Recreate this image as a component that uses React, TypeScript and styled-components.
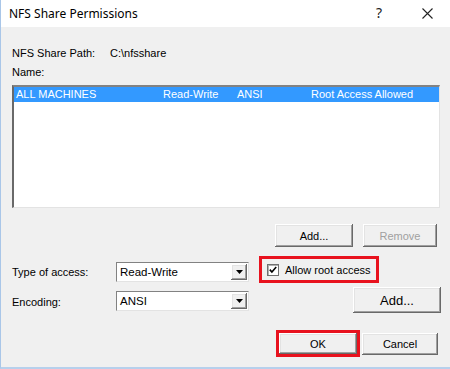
import React from 'react';
import styled, { createGlobalStyle } from 'styled-components';

const GlobalStyle = createGlobalStyle`
  html, body {
    margin: 0;
    padding: 0;
    background: #ffffff;
  }
  * {
    box-sizing: border-box;
  }
`;

const bevel = `
  box-shadow:
    inset -1px -1px #696969,
    inset 1px 1px #ffffff,
    inset -2px -2px #a0a0a0,
    inset 2px 2px #e3e3e3;
`;

const columns = [
  { key: 'name', width: 147, text: 'ALL MACHINES' },
  { key: 'access', width: 74, text: 'Read-Write' },
  { key: 'encoding', width: 74, text: 'ANSI' },
  { key: 'root', width: 130, text: 'Root Access Allowed' },
];

function CloseIcon() {
  return (
    <svg width="11" height="11" viewBox="0 0 11 11">
      <path d="M0.5 0.5 L10.5 10.5 M10.5 0.5 L0.5 10.5" stroke="#222" strokeWidth="1.1" />
    </svg>
  );
}

function ArrowIcon() {
  return (
    <svg width="7" height="4" viewBox="0 0 7 4">
      <path d="M0 0 H7 L3.5 4 Z" fill="#000" />
    </svg>
  );
}

function CheckIcon() {
  return (
    <svg width="8" height="8" viewBox="0 0 8 8">
      <path d="M0.8 3.6 L2.9 6 L7.2 1" stroke="#000" strokeWidth="1.6" fill="none" />
    </svg>
  );
}

function ComboBox({ value }: { value: string }) {
  return (
    <Combo>
      <ComboValue>{value}</ComboValue>
      <ComboButton><ArrowIcon /></ComboButton>
    </Combo>
  );
}

export default function App() {
  return (
    <>
      <GlobalStyle />
      <Window>
        <TitleBar>
          <Title>NFS Share Permissions</Title>
          <TitleControls>
            <HelpGlyph>?</HelpGlyph>
            <CloseBox><CloseIcon /></CloseBox>
          </TitleControls>
        </TitleBar>
        <Body>
          <PathRow>
            <PathLabel>NFS Share Path:</PathLabel>
            <span>C:\nfsshare</span>
          </PathRow>
          <NameLabel>Name:</NameLabel>
          <ListBox>
            <ListRow selected>
              {columns.map(col => (
                <ListCell key={col.key} style={{ width: col.width }}>{col.text}</ListCell>
              ))}
            </ListRow>
          </ListBox>
          <ButtonRow>
            <Button width={78}>Add...</Button>
            <Button width={74} disabled>Remove</Button>
          </ButtonRow>
          <FormRow height={27} top={9}>
            <FieldLabel>Type of access:</FieldLabel>
            <ComboSlot shift={5}><ComboBox value="Read-Write" /></ComboSlot>
            <Highlight>
              <CheckRow>
                <CheckBox><CheckIcon /></CheckBox>
                <span>Allow root access</span>
              </CheckRow>
            </Highlight>
          </FormRow>
          <FormRow height={26} top={4}>
            <FieldLabel>Encoding:</FieldLabel>
            <ComboSlot shift={2}><ComboBox value="ANSI" /></ComboSlot>
            <WideButton>Add...</WideButton>
          </FormRow>
          <FooterRow>
            <OkHighlight>
              <Button width={78} height={21}>OK</Button>
            </OkHighlight>
            <Button width={76} height={22}>Cancel</Button>
          </FooterRow>
        </Body>
      </Window>
    </>
  );
}

const Window = styled.div`
  width: 450px;
  height: 369px;
  display: flex;
  flex-direction: column;
  border-left: 1px solid #a9c6e8;
  border-bottom: 2px solid #b7d0ec;
  font-family: "Liberation Sans", Arial, sans-serif;
  font-size: 11px;
  color: #000;
`;

const TitleBar = styled.div`
  height: 27px;
  flex: none;
  display: flex;
  align-items: center;
  justify-content: space-between;
  padding-left: 8px;
  background: #ffffff;
`;

const Title = styled.div`
  font-family: "Noto Sans", "Liberation Sans", sans-serif;
  font-size: 12px;
  color: #000;
  padding-bottom: 1px;
`;

const TitleControls = styled.div`
  display: flex;
  align-items: center;
  height: 100%;
`;

const HelpGlyph = styled.div`
  width: 46px;
  text-align: center;
  font-family: "Noto Sans", sans-serif;
  font-size: 14px;
  color: #222;
  padding-bottom: 2px;
  margin-right: 2px;
`;

const CloseBox = styled.div`
  width: 46px;
  display: flex;
  justify-content: center;
  padding-bottom: 1px;
`;

const Body = styled.div`
  flex: 1;
  display: flex;
  flex-direction: column;
  padding-left: 11px;
  background: #f0f0f0;
`;

const PathRow = styled.div`
  display: flex;
  margin-top: 19px;
  height: 14px;
  line-height: 14px;
`;

const PathLabel = styled.span`
  width: 98px;
`;

const NameLabel = styled.div`
  margin-top: 5px;
  height: 14px;
  line-height: 14px;
`;

const ListBox = styled.div`
  margin-top: 6px;
  width: 428px;
  height: 123px;
  background: #ffffff;
  border-top: 2px solid #828282;
  border-left: 2px solid #696969;
  border-right: 1px solid #e3e3e3;
  border-bottom: 1px solid #e3e3e3;
`;

const ListRow = styled.div<{ selected?: boolean }>`
  display: flex;
  height: 15px;
  line-height: 15px;
  padding-left: 2px;
  background: ${props => (props.selected ? '#3399ff' : 'transparent')};
  color: ${props => (props.selected ? '#ffffff' : '#000')};
`;

const ListCell = styled.span`
  white-space: nowrap;
  flex: none;
`;

const ButtonRow = styled.div`
  width: 428px;
  display: flex;
  justify-content: flex-end;
  gap: 10px;
  padding-right: 3px;
  margin-top: 16px;
`;

const Button = styled.button<{ width: number; height?: number }>`
  width: ${props => props.width}px;
  height: ${props => props.height ?? 23}px;
  padding: 0;
  border: none;
  background: #f0f0f0;
  font-family: "Liberation Sans", Arial, sans-serif;
  font-size: 11px;
  color: ${props => (props.disabled ? '#a0a0a0' : '#000')};
  ${bevel}
`;

const WideButton = styled(Button).attrs({ width: 88, height: 26 })`
  margin-left: auto;
  margin-right: -1px;
  font-size: 13px;
`;

const FormRow = styled.div<{ height: number; top: number }>`
  width: 428px;
  display: flex;
  align-items: center;
  height: ${props => props.height}px;
  margin-top: ${props => props.top}px;
`;

const FieldLabel = styled.div`
  width: 104px;
  flex: none;
  padding-top: 4px;
`;

const ComboSlot = styled.div<{ shift: number }>`
  margin-top: ${props => props.shift}px;
`;

const Combo = styled.div`
  width: 133px;
  height: 20px;
  display: flex;
  align-items: center;
  justify-content: space-between;
  background: #ffffff;
  border-top: 1px solid #828282;
  border-left: 1px solid #828282;
  border-right: 1px solid #e3e3e3;
  border-bottom: 1px solid #e3e3e3;
  padding: 1px;
`;

const ComboValue = styled.span`
  padding-left: 2px;
  font-size: 11.5px;
`;

const ComboButton = styled.div`
  width: 16px;
  height: 16px;
  display: flex;
  align-items: center;
  justify-content: center;
  background: #f0f0f0;
  ${bevel}
`;

const Highlight = styled.div`
  margin-left: 10px;
  width: 120px;
  height: 27px;
  border: 3px solid #e8121e;
  display: flex;
  align-items: center;
`;

const CheckRow = styled.label`
  display: flex;
  align-items: center;
  gap: 6px;
  padding-left: 5px;
  font-size: 11px;
  padding-top: 1px;
`;

const CheckBox = styled.span`
  width: 12px;
  height: 12px;
  display: flex;
  align-items: center;
  justify-content: center;
  background: #ffffff;
  border: 1px solid #707070;
  box-shadow: inset 1px 1px #b0b0b0;
`;

const FooterRow = styled.div`
  width: 428px;
  display: flex;
  justify-content: flex-end;
  align-items: center;
  gap: 2px;
  padding-right: 2px;
  margin-top: 17px;
`;

const OkHighlight = styled.div`
  border: 3px solid #e8121e;
  display: flex;
`;
